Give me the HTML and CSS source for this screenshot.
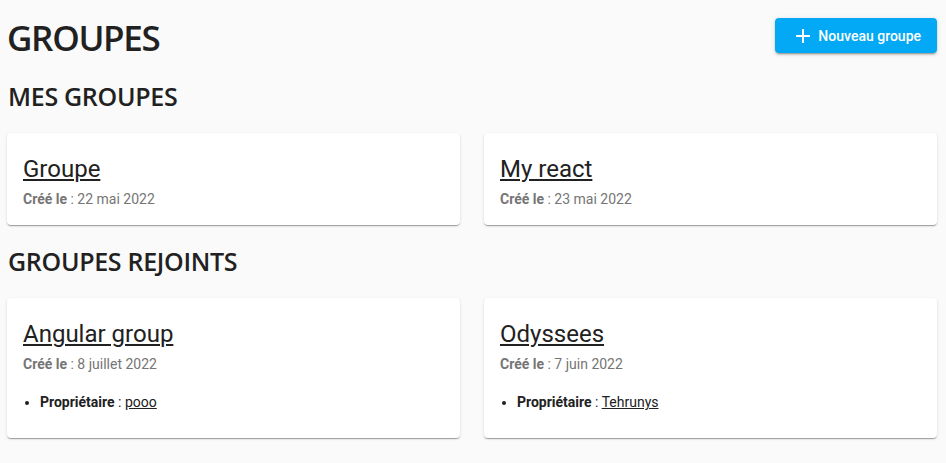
FILE: index.html
```html
<!DOCTYPE html>
<html lang="fr">
<head>
<meta charset="utf-8">
<title>Groupes</title>
<link rel="stylesheet" href="styles.css">
</head>
<body>
<main class="page">
  <header class="page-header">
    <h1 class="page-title">GROUPES</h1>
    <button class="btn-new" type="button">
      <svg class="btn-icon" viewBox="0 0 24 24" width="24" height="24" aria-hidden="true"><path d="M19 13h-6v6h-2v-6H5v-2h6V5h2v6h6v2z" fill="#fff"/></svg>
      <span>Nouveau groupe</span>
    </button>
  </header>

  <h2 class="section-title">MES GROUPES</h2>
  <div class="card-grid">
    <article class="card">
      <a class="card-title" href="#">Groupe</a>
      <p class="card-date"><b>Créé le</b> : 22 mai 2022</p>
    </article>
    <article class="card">
      <a class="card-title" href="#">My react</a>
      <p class="card-date"><b>Créé le</b> : 23 mai 2022</p>
    </article>
  </div>

  <h2 class="section-title">GROUPES REJOINTS</h2>
  <div class="card-grid">
    <article class="card">
      <a class="card-title" href="#">Angular group</a>
      <p class="card-date"><b>Créé le</b> : 8 juillet 2022</p>
      <ul class="card-list">
        <li><b>Propriétaire</b> : <a href="#">pooo</a></li>
      </ul>
    </article>
    <article class="card">
      <a class="card-title" href="#">Odyssees</a>
      <p class="card-date"><b>Créé le</b> : 7 juin 2022</p>
      <ul class="card-list">
        <li><b>Propriétaire</b> : <a href="#">Tehrunys</a></li>
      </ul>
    </article>
  </div>
</main>
</body>
</html>
```

FILE: styles.css
```css
* { box-sizing: border-box; }
html, body { margin: 0; padding: 0; }
body {
  background: #fafafa;
  font-family: Roboto, "Liberation Sans", sans-serif;
  color: #212121;
}
.page { padding: 16px 9px 8px 7px; }
.page-header {
  display: flex;
  justify-content: space-between;
  align-items: flex-start;
}
.page-title {
  margin: 0;
  font-family: "Open Sans", "Noto Sans", sans-serif;
  font-weight: 600;
  font-size: 35px;
  line-height: 44px;
  color: #212121;
  letter-spacing: -1.3px;
}
.btn-new {
  margin-top: 2px;
  display: flex;
  align-items: center;
  gap: 3px;
  height: 35px;
  padding: 0 16px;
  border: none;
  border-radius: 4px;
  background: #03a9f4;
  color: #fff;
  font-family: Roboto, sans-serif;
  font-weight: 500;
  font-size: 14px;
  box-shadow: 0 3px 1px -2px rgba(0,0,0,.2), 0 2px 2px 0 rgba(0,0,0,.14), 0 1px 5px 0 rgba(0,0,0,.12);
}
.btn-icon { display: block; }
.section-title {
  margin: 20px 0 21px 1px;
  font-family: "Open Sans", "Noto Sans", sans-serif;
  font-weight: 600;
  font-size: 25px;
  line-height: 32px;
  color: #212121;
  letter-spacing: -0.3px;
}
.card-grid {
  display: grid;
  grid-template-columns: 1fr 1fr;
  gap: 24px;
}
.card {
  background: #fff;
  border-radius: 4px;
  padding: 20px 16px 16px;
  box-shadow: 0 2px 1px -1px rgba(0,0,0,.2), 0 1px 1px 0 rgba(0,0,0,.14), 0 1px 3px 0 rgba(0,0,0,.12);
}
.card-title {
  display: block;
  font-size: 24px;
  line-height: 32px;
  color: #212121;
  text-decoration: underline;
  text-underline-offset: 2px;
  text-decoration-thickness: 1.5px;
  width: fit-content;
}
.card-date {
  margin: 4px 0 0;
  font-size: 14px;
  line-height: 20px;
  color: #757575;
}
.card-date b { font-weight: 700; }
.card-list {
  margin: 18px 0 10px;
  padding-left: 17px;
  font-size: 14px;
  line-height: 20px;
  color: #212121;
}
.card-list b { font-weight: 700; }
.card-list a { color: #212121; }
```
